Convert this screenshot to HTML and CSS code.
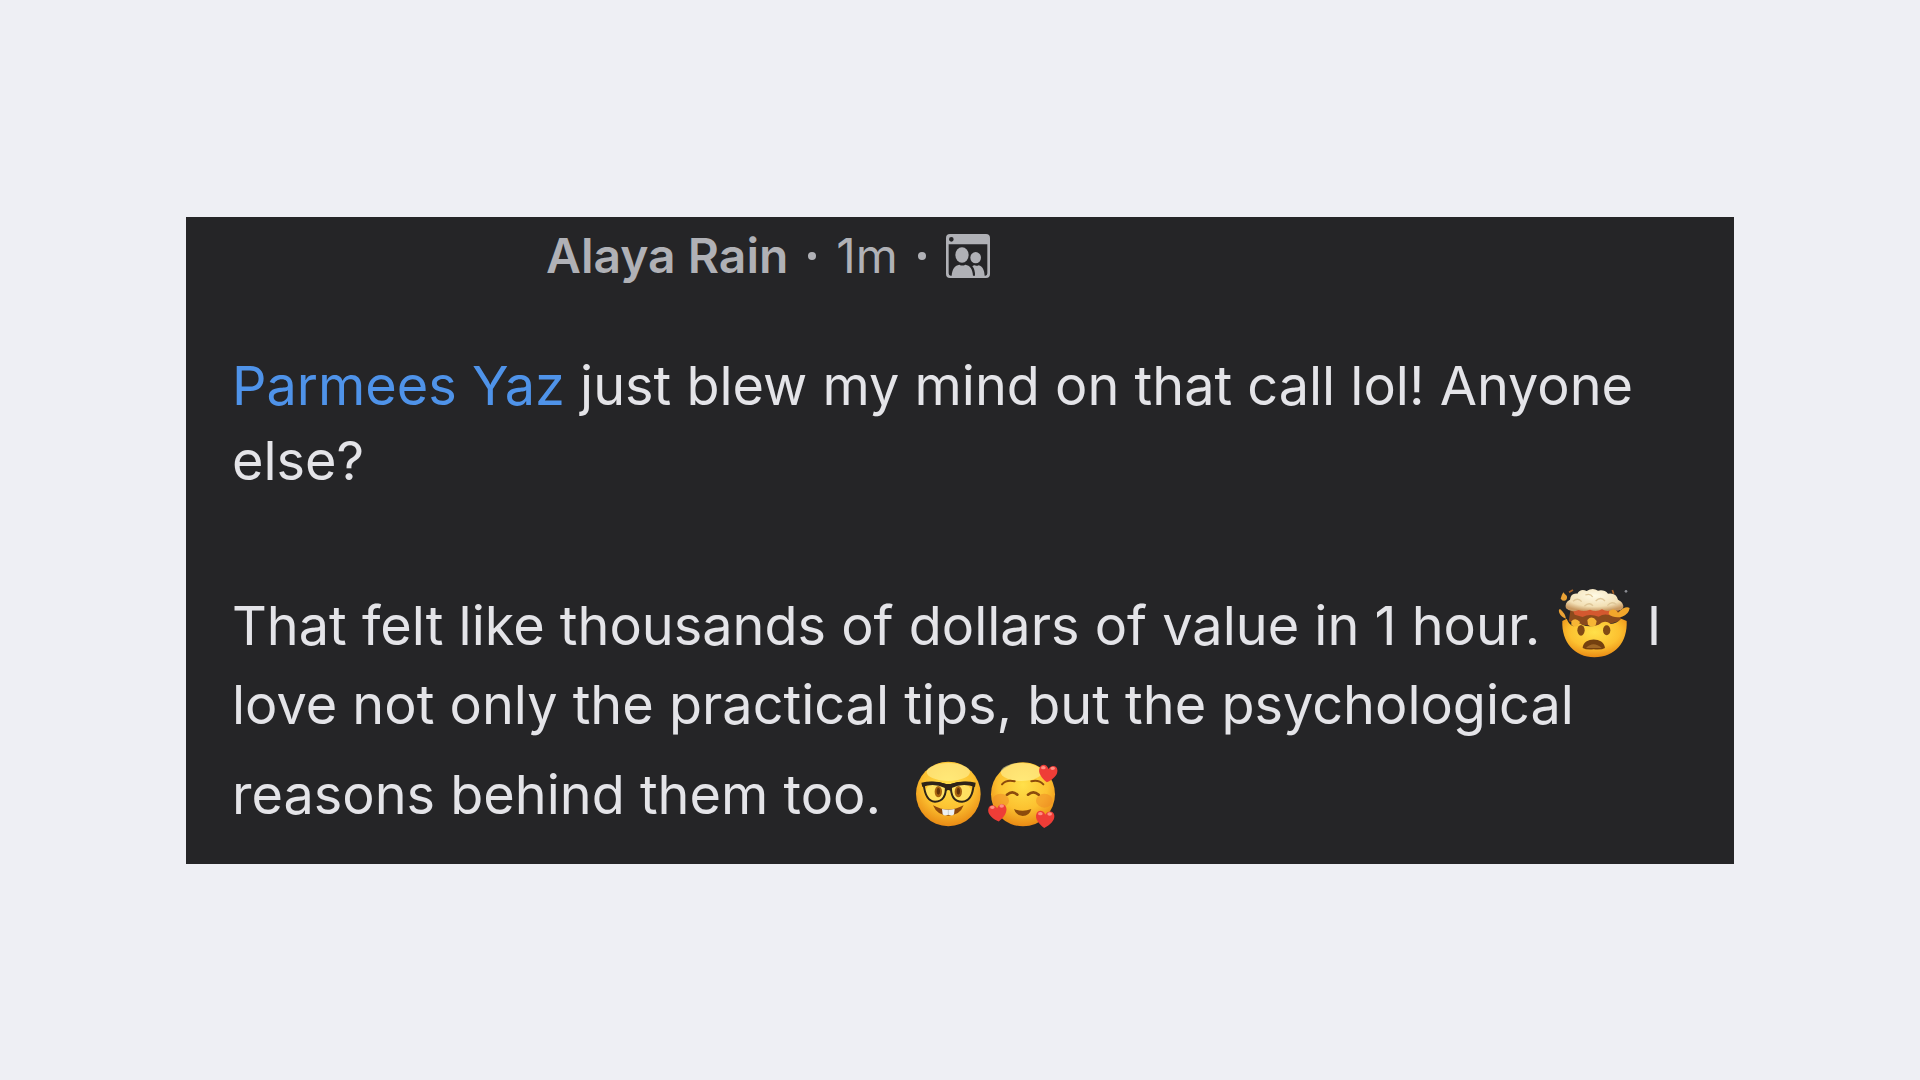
FILE: index.html
```
<!DOCTYPE html>
<html lang="en">
<head>
  <meta charset="UTF-8" />
  <meta name="viewport" content="width=device-width, initial-scale=1.0" />
  <title>Alaya Rain</title>
  <link rel="stylesheet" href="styles.css">
</head>
<body>
  <article class="post">
    <header class="post-header">
      <span class="author">Alaya Rain</span>
      <span class="dot"></span>
      <span class="time">1m</span>
      <span class="dot"></span>
      <svg class="group-icon" viewBox="0 0 132 132" role="img" aria-label="Group members">
        <path fill="#b0b1b6" fill-rule="evenodd" d="M12 0H120Q132 0 132 12V120Q132 132 120 132H12Q0 132 0 120V12Q0 0 12 0ZM8 31V118Q8 125 14 125H118Q124 125 124 118V31ZM16 9A7 7 0 1 0 16 23A7 7 0 1 0 16 9Z"/>
        <g fill="#b0b1b6">
          <ellipse cx="48" cy="63" rx="20" ry="23"/>
          <ellipse cx="89" cy="71" rx="16" ry="17"/>
          <path d="M17 126C18 105 27 94 40 92Q49 97 58 92C72 94 80 105 81 126Z"/>
          <path d="M79 97Q83 93 87 94Q92 97 98 94C110 97 115 108 116 126H87Q88 107 79 97Z"/>
        </g>
      </svg>
    </header>

    <p class="intro"><a class="mention" href="#">Parmees Yaz</a> just blew my mind on that call lol! Anyone else?</p>

    <p class="message">That felt like thousands of dollars of value in 1 hour.
      <svg class="emoji emoji-wide" viewBox="40 35 228 216" role="img" aria-label="exploding head">
        <defs>
          <radialGradient id="face" cx="50%" cy="35%" r="65%">
            <stop offset="0" stop-color="#ffe04a"/>
            <stop offset="0.6" stop-color="#fcc130"/>
            <stop offset="1" stop-color="#e98a14"/>
          </radialGradient>
          <radialGradient id="cloud" cx="50%" cy="30%" r="70%">
            <stop offset="0" stop-color="#fffbe6"/>
            <stop offset="0.7" stop-color="#f2dfb4"/>
            <stop offset="1" stop-color="#c99a62"/>
          </radialGradient>
        </defs>
        <path fill="#8a4a1c" d="M84 100H226L236 134Q200 150 155 152Q110 150 78 138Z"/>
        <path fill="url(#face)" d="M59 137L72 130Q80 150 94 153Q106 139 118 148Q140 158 168 148Q186 132 204 146Q222 144 236 130L252 137C255 200 218 245 155 246C96 245 56 200 59 137Z"/>
        <path fill="#d4582f" d="M88 98H222L208 122Q186 112 168 124Q140 114 120 125L96 118Z"/>
        <path fill="#f6b535" d="M86 138Q98 124 112 140L106 152Q92 156 86 148ZM134 134Q148 118 162 137L159 150Q148 158 136 148Z"/>
        <path fill="#f2a72b" d="M198 116Q199 97 216 98L226 112Q248 90 261 98Q258 118 238 124Q214 130 198 116Z"/>
        <path fill="#eaa235" d="M53 102Q46 99 50 113Q56 126 70 130Q68 115 53 102ZM62 51Q56 60 54 70Q64 82 72 72Q76 62 67 57Z"/>
        <path fill="url(#cloud)" d="M70 99Q65 81 82 73Q84 53 104 55Q113 39 132 47Q150 36 166 46Q185 42 196 55Q220 51 226 73Q246 82 241 99Q230 112 211 102Q195 112 178 102Q160 112 142 103Q123 111 108 104Q83 113 70 99Z"/>
        <path fill="none" stroke="#dfc798" stroke-width="4" d="M91 78Q105 65 117 79M128 59Q143 53 150 65M159 77Q174 62 187 77M194 91Q208 75 222 88M125 93Q139 79 151 91"/>
        <path fill="none" stroke="#a86126" stroke-width="5" d="M79 51L91 44M209 44L213 55"/>
        <circle cx="250" cy="48" r="4" fill="#8a8b91"/>
        <ellipse cx="115" cy="165" rx="11" ry="16" fill="#814a14"/>
        <ellipse cx="192" cy="165" rx="11" ry="15" fill="#814a14"/>
        <path fill="#74400f" d="M120 218C122 184 184 184 187 218Q178 224 153 222Q130 224 120 218Z"/>
        <path fill="#9f6624" d="M130 218Q152 196 177 218Z"/>
      </svg>
      I love not only the practical tips, but the psychological reasons behind them too. &nbsp;<span class="emoji-pair"><svg class="emoji" viewBox="25 20 210 210" role="img" aria-label="nerd face">
        <circle cx="131" cy="128" r="97" fill="url(#face)"/>
        <ellipse cx="131" cy="62" rx="65" ry="27" fill="#fff19a" opacity="0.6"/>
        <ellipse cx="94" cy="122" rx="32" ry="27" fill="#ffe66b" opacity="0.8"/>
        <ellipse cx="168" cy="122" rx="32" ry="27" fill="#ffe66b" opacity="0.8"/>
        <ellipse cx="101" cy="121" rx="11" ry="17" fill="#a86410"/>
        <ellipse cx="161" cy="121" rx="11" ry="17" fill="#a86410"/>
        <ellipse cx="101" cy="120" rx="5" ry="10" fill="#633308"/>
        <ellipse cx="161" cy="120" rx="5" ry="10" fill="#633308"/>
        <path fill="none" stroke="#2e2418" stroke-width="6" d="M57 98Q90 89 123 101C126 133 115 151 91 151C68 150 60 130 57 98ZM139 101Q172 89 207 98C205 130 196 150 172 151C148 151 137 133 139 101Z"/>
        <path fill="#2e2418" d="M50 94Q88 86 124 98H138Q175 86 213 94L211 107Q173 94 141 110L137 119Q131 113 125 119L121 110Q88 94 53 107Z"/>
        <path fill="#8c470b" d="M85 162Q130 187 177 162Q166 192 131 193Q97 192 85 162Z"/>
        <path fill="#eef1f3" d="M112 173Q131 178 150 173L148 189Q145 195 131 190Q118 195 114 189Z"/>
        <path stroke="#b5bcc0" stroke-width="2" d="M131 176V190"/>
      </svg><svg class="emoji" viewBox="250 20 210 210" role="img" aria-label="smiling face with hearts">
        <defs>
          <path id="heart" d="M0 28C-17 17 -31 3 -27 -12C-23 -27 -6 -26 0 -12C6 -26 24 -27 27 -12C30 3 17 17 0 28Z"/>
        </defs>
        <circle cx="355" cy="129" r="96" fill="url(#face)"/>
        <ellipse cx="350" cy="62" rx="62" ry="27" fill="#fff19a" opacity="0.6"/>
        <ellipse cx="288" cy="148" rx="25" ry="21" fill="#ee8726" opacity="0.5"/>
        <ellipse cx="419" cy="148" rx="25" ry="21" fill="#ee8726" opacity="0.5"/>
        <g fill="none" stroke="#8c4b0c" stroke-linecap="round">
          <path stroke-width="6" d="M292 99Q305 84 330 90M380 90Q402 84 416 99"/>
          <path stroke-width="8" d="M307 130Q323 116 338 130M370 130Q386 116 402 130"/>
        </g>
        <path fill="#8c4b0c" d="M328 173Q354 184 380 173Q375 193 354 194Q333 193 328 173Z"/>
        <g fill="#ee3d37">
          <use href="#heart" transform="translate(430 65) rotate(7)"/>
          <use href="#heart" transform="translate(279 183) rotate(-7)"/>
          <use href="#heart" transform="translate(421 202) rotate(5)"/>
        </g>
        <g fill="#ff8f83">
          <ellipse cx="416" cy="49" rx="7" ry="5"/>
          <ellipse cx="444" cy="51" rx="7" ry="5"/>
          <ellipse cx="263" cy="168" rx="7" ry="5"/>
          <ellipse cx="291" cy="164" rx="7" ry="5"/>
          <ellipse cx="407" cy="187" rx="7" ry="5"/>
          <ellipse cx="435" cy="188" rx="7" ry="5"/>
        </g>
      </svg></span>
    </p>
  </article>
</body>
</html>
```
FILE: styles.css
```
* {
  box-sizing: border-box;
}
body {
  margin: 0;
  min-height: 100vh;
  padding: 0 186px;
  display: flex;
  align-items: center;
  background-color: #eeeff4;
  font-family: Inter, "Liberation Sans", sans-serif;
}
.post {
  flex: 1;
  padding: 11px 46px 30px;
  background-color: #252527;
  color: #e4e4e8;
}
.post-header {
  display: flex;
  align-items: center;
  gap: 20px;
  margin-bottom: 64px;
  padding-left: 314px;
  font-size: 48px;
  line-height: 56px;
  color: #b0b1b6;
}
.author {
  font-weight: 600;
}
.dot {
  width: 8px;
  height: 8px;
  border-radius: 50%;
  background-color: #b0b1b6;
}
.group-icon {
  width: 44px;
  height: 44px;
}
.intro, .message {
  margin: 0;
  font-size: 54px;
}
.intro {
  margin-bottom: 88px;
  line-height: 75px;
}
.message {
  line-height: 79px;
}
.mention {
  color: #4f93e9;
  text-decoration: none;
}
.emoji {
  width: 70px;
  height: 70px;
  vertical-align: -14px;
}
.emoji-wide {
  width: 76px;
  height: 72px;
}
.emoji-pair {
  display: inline-flex;
  gap: 5px;
  padding: 14px 0 0 2px;
  vertical-align: -14px;
}
```
